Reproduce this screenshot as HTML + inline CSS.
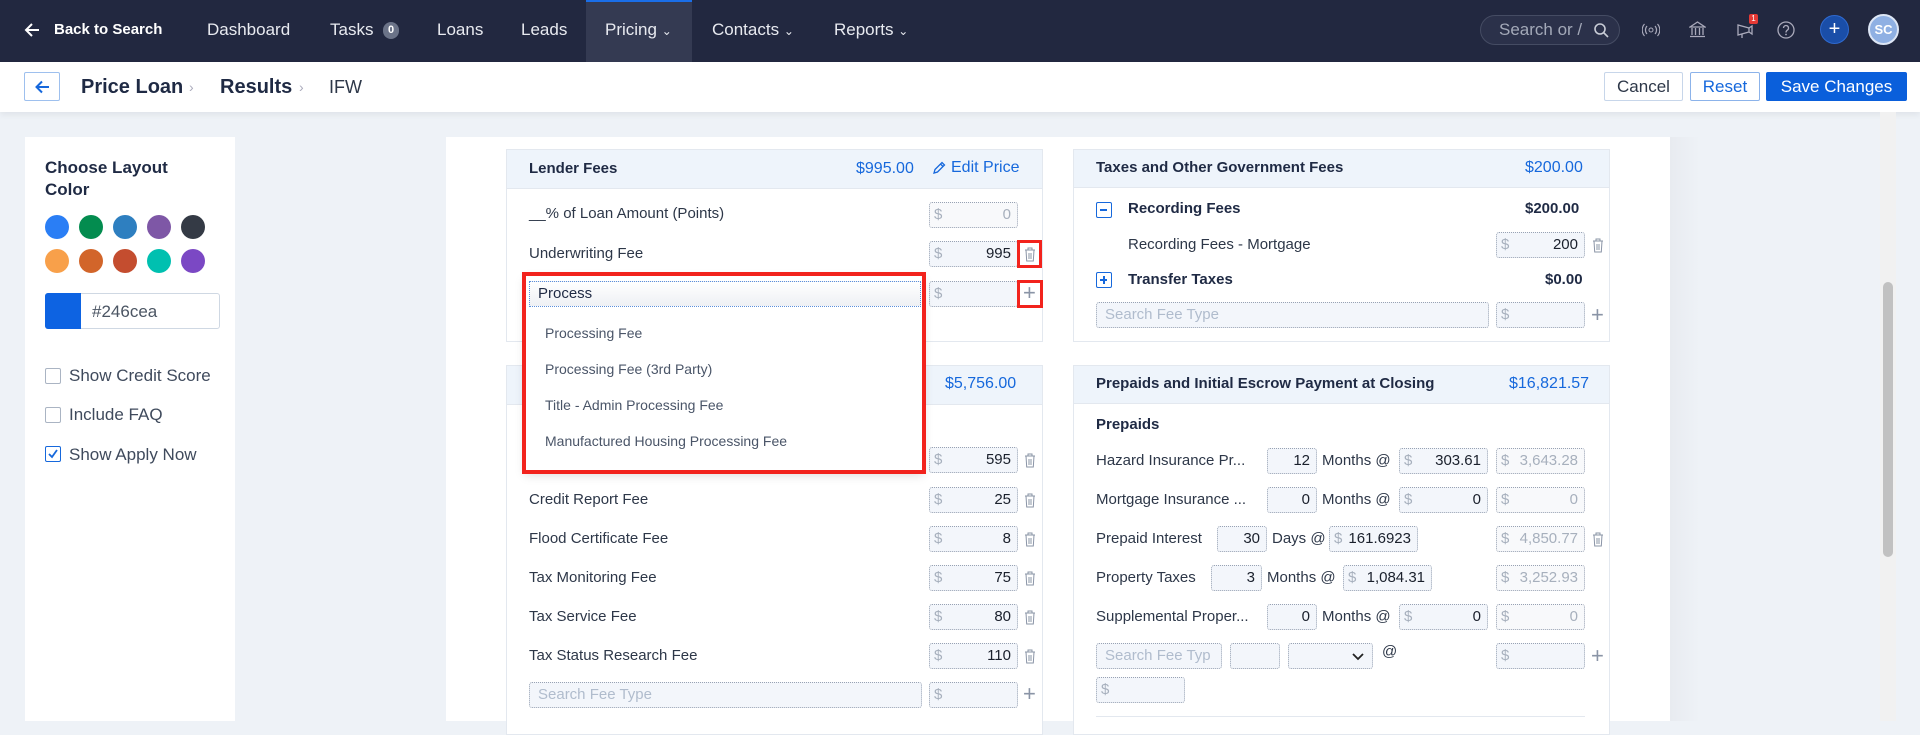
<!DOCTYPE html>
<html><head><meta charset="utf-8"><style>
*{box-sizing:border-box;margin:0;padding:0}
body{width:1920px;height:721px;overflow:hidden;background:#eef2f7;font-family:"Liberation Sans",sans-serif;position:relative;color:#2d3748}
.a{position:absolute;white-space:nowrap}
.nav{position:absolute;left:0;top:0;width:1920px;height:62px;background:#222840}
.ni{position:absolute;top:20px;font-size:17px;color:#e8eaf0}
.sub{position:absolute;left:0;top:62px;width:1920px;height:50px;background:#fff;box-shadow:0 3px 6px rgba(0,0,0,.06)}
.btn{position:absolute;top:72px;height:29px;border:1px solid #c7d6ea;background:#fff;font-size:17px;text-align:center;line-height:27px;border-radius:2px}
.panel{position:absolute;background:#fff;border:1px solid #e3e8ef}
.ph{position:absolute;left:0;right:0;top:0;height:39px;background:#eef4fb;border-bottom:1px solid #e3e8ef}
.t{position:absolute;font-size:15px;color:#2d3748;white-space:nowrap;line-height:18px}
.blue{color:#1668dc}
.inp{position:absolute;height:26px;border:1px dotted #98a2b3;background:#f3f6fb;border-radius:3px;font-size:15px;line-height:24px;color:#1a202c;text-align:right;padding-right:6px}
.inp .d{position:absolute;left:4px;top:0;color:#a7b0bd}
.inp.g{color:#a7b0bd;background:#f8f9fb}
.ph2{color:#b0bccd;text-align:left;padding-left:8px}
.tr{position:absolute;width:12px;height:15px}
.pl{position:absolute;font-size:22px;color:#8a94a6;line-height:20px}
.cb{position:absolute;left:45px;width:16px;height:16px;border:1px solid #aab4c3;border-radius:2px;background:#fff}
.cl{position:absolute;left:69px;font-size:17px;color:#3f4a5c}
.c{position:absolute;width:24px;height:24px;border-radius:50%}
.dd{position:absolute;font-size:14px;color:#4a5568}
</style></head><body>
<div class="nav">
  <svg class="a" style="left:24px;top:22px" width="16" height="16" viewBox="0 0 16 16"><path d="M15 8H2M8 2L2 8l6 6" stroke="#fff" stroke-width="2" fill="none"/></svg>
  <div class="ni" style="left:54px;top:21px;font-size:15px;font-weight:bold;color:#fff">Back to Search</div>
  <div class="ni" style="left:207px">Dashboard</div>
  <div class="ni" style="left:330px">Tasks</div>
  <div class="a" style="left:383px;top:22px;width:16px;height:17px;border-radius:8px;background:#6b7388;color:#fff;font-size:11px;text-align:center;line-height:17px;font-weight:bold">0</div>
  <div class="ni" style="left:437px">Loans</div>
  <div class="ni" style="left:521px">Leads</div>
  <div class="a" style="left:586px;top:0;width:106px;height:62px;background:#343a52;border-top:2px solid #1a6ee8"></div>
  <div class="ni" style="left:605px">Pricing <span style="font-size:12px">&#8964;</span></div>
  <div class="ni" style="left:712px">Contacts <span style="font-size:12px">&#8964;</span></div>
  <div class="ni" style="left:834px">Reports <span style="font-size:12px">&#8964;</span></div>
  <div class="a" style="left:1480px;top:15px;width:140px;height:30px;border:1px solid #454c63;border-radius:15px;background:#2b314a;color:#a3a9b8;font-size:17px;padding-left:18px;line-height:28px">Search or /<svg style="position:absolute;right:10px;top:7px" width="15" height="15" viewBox="0 0 15 15"><circle cx="6" cy="6" r="5" stroke="#c8ccd6" stroke-width="1.6" fill="none"/><path d="M10 10l4 4" stroke="#c8ccd6" stroke-width="1.6"/></svg></div>
  <svg class="a" style="left:1642px;top:22px" width="18" height="16" viewBox="0 0 18 16"><circle cx="9" cy="8" r="2" stroke="#aab" fill="none"/><path d="M5 4a6 6 0 000 8M13 4a6 6 0 010 8M2.5 2a9 9 0 000 12M15.5 2a9 9 0 010 12" stroke="#aab" fill="none" stroke-width="1.2"/></svg>
  <svg class="a" style="left:1689px;top:21px" width="17" height="17" viewBox="0 0 17 17"><path d="M1 6L8.5 1 16 6zM3 7v7M6.5 7v7M10.5 7v7M14 7v7M1 15.5h15" stroke="#aab" fill="none" stroke-width="1.3"/></svg>
  <svg class="a" style="left:1736px;top:21px" width="18" height="18" viewBox="0 0 18 18"><path d="M2 4v10l11-3V7zM13 7l3-2v8l-3-2M6 13v4" stroke="#aab" fill="none" stroke-width="1.3"/></svg>
  <div class="a" style="left:1749px;top:14px;width:9px;height:10px;background:#e53935;color:#fff;font-size:8px;text-align:center;line-height:10px;border-radius:2px">1</div>
  <svg class="a" style="left:1777px;top:21px" width="18" height="18" viewBox="0 0 18 18"><circle cx="9" cy="9" r="8" stroke="#aab" fill="none" stroke-width="1.3"/><path d="M6.5 7a2.5 2.5 0 114 2c-1 .7-1.5 1-1.5 2.5" stroke="#aab" fill="none" stroke-width="1.3"/><circle cx="9" cy="13.5" r=".9" fill="#aab"/></svg>
  <div class="a" style="left:1820px;top:15px;width:29px;height:29px;border-radius:50%;background:#1a4ea8;border:1px solid #2f6ad0;color:#fff;font-size:20px;text-align:center;line-height:26px">+</div>
  <div class="a" style="left:1868px;top:14px;width:31px;height:31px;border-radius:50%;background:#8fb0e3;border:2px solid #dde6f5;color:#fff;font-size:13px;font-weight:bold;text-align:center;line-height:27px">SC</div>
</div>
<div class="sub"></div>
<div class="a" style="left:24px;top:72px;width:36px;height:29px;border:1px solid #9ec0ee;border-radius:2px;background:#fff"><svg style="position:absolute;left:10px;top:7px" width="15" height="14" viewBox="0 0 15 14"><path d="M14 7H2M7 1.5L1.5 7 7 12.5" stroke="#1668dc" stroke-width="2" fill="none"/></svg></div>
<div class="a" style="left:81px;top:76px;font-size:20px;font-weight:bold;color:#1f2a44">Price Loan</div>
<div class="a" style="left:189px;top:79px;font-size:14px;color:#aab">&#8250;</div>
<div class="a" style="left:220px;top:76px;font-size:20px;font-weight:bold;color:#1f2a44">Results</div>
<div class="a" style="left:299px;top:79px;font-size:14px;color:#aab">&#8250;</div>
<div class="a" style="left:329px;top:77px;font-size:18px;color:#2d3748">IFW</div>
<div class="btn" style="left:1604px;width:79px;color:#2d3748">Cancel</div>
<div class="btn" style="left:1690px;width:70px;color:#1668dc;border-color:#8cb3ea">Reset</div>
<div class="btn" style="left:1766px;width:141px;color:#fff;background:#0a5fdb;border-color:#0a5fdb">Save Changes</div>

<!-- left panel -->
<div class="a" style="left:25px;top:137px;width:210px;height:584px;background:#fff"></div>
<div class="a" style="left:45px;top:157px;font-size:17px;font-weight:bold;color:#1f2a44;line-height:22px">Choose Layout<br>Color</div>
<div class="c" style="left:45px;top:215px;background:#2a7ef5"></div>
<div class="c" style="left:79px;top:215px;background:#038c4f"></div>
<div class="c" style="left:113px;top:215px;background:#2e7fc0"></div>
<div class="c" style="left:147px;top:215px;background:#7e57a6"></div>
<div class="c" style="left:181px;top:215px;background:#343a45"></div>
<div class="c" style="left:45px;top:249px;background:#f8a04a"></div>
<div class="c" style="left:79px;top:249px;background:#d2652a"></div>
<div class="c" style="left:113px;top:249px;background:#c44d2f"></div>
<div class="c" style="left:147px;top:249px;background:#00c0b0"></div>
<div class="c" style="left:181px;top:249px;background:#7b48c4"></div>
<div class="a" style="left:45px;top:293px;width:175px;height:36px;border:1px solid #cfd8e3;border-radius:3px;background:#fff"><div style="position:absolute;left:-1px;top:-1px;width:36px;height:36px;background:#0d63e2;border-radius:3px 0 0 3px"></div><div style="position:absolute;left:46px;top:8px;font-size:17px;color:#4b5563">#246cea</div></div>
<div class="cb" style="top:368px"></div><div class="cl" style="top:366px">Show Credit Score</div>
<div class="cb" style="top:407px"></div><div class="cl" style="top:405px">Include FAQ</div>
<div class="cb" style="top:446px;border-color:#1668dc"><svg style="position:absolute;left:1px;top:1px" width="12" height="12" viewBox="0 0 12 12"><path d="M2 6l3 3 5-7" stroke="#1668dc" stroke-width="1.8" fill="none"/></svg></div><div class="cl" style="top:445px">Show Apply Now</div>

<!-- main card -->
<div class="a" style="left:446px;top:137px;width:1224px;height:584px;background:#fff"></div>
<div class="a" style="left:1670px;top:137px;width:30px;height:584px;background:linear-gradient(90deg,#e8ebf0,#eef2f7)"></div>
<div class="a" style="left:1880px;top:112px;width:16px;height:609px;background:#f1f1f1"></div>
<div class="a" style="left:1883px;top:282px;width:10px;height:275px;background:#c1c1c1;border-radius:5px"></div>

<!-- Lender fees -->
<div class="panel" style="left:506px;top:149px;width:537px;height:193px"><div class="ph"></div></div>
<div class="t" style="left:529px;top:160px;font-weight:bold;color:#1f2a44;font-size:15px">Lender Fees</div>
<div class="t blue" style="left:856px;top:160px;font-size:16px">$995.00</div>
<svg class="a" style="left:932px;top:161px" width="14" height="14" viewBox="0 0 14 14"><path d="M2 12l1-3.5L10 1.5l2.5 2.5-7 7zM8.5 3l2.5 2.5" stroke="#1668dc" stroke-width="1.3" fill="none"/></svg>
<div class="t blue" style="left:951px;top:159px;font-size:16px">Edit Price</div>
<div class="t" style="left:529px;top:205px">__% of Loan Amount (Points)</div>
<div class="inp g" style="left:929px;top:202px;width:89px"><span class="d">$</span>0</div>
<div class="t" style="left:529px;top:245px">Underwriting Fee</div>
<div class="inp" style="left:929px;top:241px;width:89px"><span class="d">$</span>995</div>
<div class="inp" style="left:929px;top:281px;width:89px"><span class="d">$</span></div>

<!-- second left panel -->
<div class="panel" style="left:506px;top:365px;width:537px;height:370px"><div class="ph"></div></div>
<div class="t blue" style="left:945px;top:375px;font-size:16px">$5,756.00</div>
<div class="inp" style="left:929px;top:447px;width:89px"><span class="d">$</span>595</div>
<div class="t" style="left:529px;top:491px">Credit Report Fee</div>
<div class="inp" style="left:929px;top:487px;width:89px"><span class="d">$</span>25</div>
<div class="t" style="left:529px;top:530px">Flood Certificate Fee</div>
<div class="inp" style="left:929px;top:526px;width:89px"><span class="d">$</span>8</div>
<div class="t" style="left:529px;top:569px">Tax Monitoring Fee</div>
<div class="inp" style="left:929px;top:565px;width:89px"><span class="d">$</span>75</div>
<div class="t" style="left:529px;top:608px">Tax Service Fee</div>
<div class="inp" style="left:929px;top:604px;width:89px"><span class="d">$</span>80</div>
<div class="t" style="left:529px;top:647px">Tax Status Research Fee</div>
<div class="inp" style="left:929px;top:643px;width:89px"><span class="d">$</span>110</div>
<div class="inp ph2" style="left:529px;top:682px;width:393px;color:#b0bccd">Search Fee Type</div>
<div class="inp" style="left:929px;top:682px;width:89px"><span class="d">$</span></div>
<div class="pl" style="left:1023px;top:684px">+</div>

<!-- trash icons left -->
<svg class="tr" style="left:1024px;top:247px" viewBox="0 0 12 15"><path d="M1 3h10M4 3V1h4v2M2 3l.7 11h6.6L10 3M5 6v6M7 6v6" stroke="#8a94a6" fill="none" stroke-width="1"/></svg>
<svg class="tr" style="left:1024px;top:453px" viewBox="0 0 12 15"><path d="M1 3h10M4 3V1h4v2M2 3l.7 11h6.6L10 3M5 6v6M7 6v6" stroke="#8a94a6" fill="none" stroke-width="1"/></svg>
<svg class="tr" style="left:1024px;top:493px" viewBox="0 0 12 15"><path d="M1 3h10M4 3V1h4v2M2 3l.7 11h6.6L10 3M5 6v6M7 6v6" stroke="#8a94a6" fill="none" stroke-width="1"/></svg>
<svg class="tr" style="left:1024px;top:532px" viewBox="0 0 12 15"><path d="M1 3h10M4 3V1h4v2M2 3l.7 11h6.6L10 3M5 6v6M7 6v6" stroke="#8a94a6" fill="none" stroke-width="1"/></svg>
<svg class="tr" style="left:1024px;top:571px" viewBox="0 0 12 15"><path d="M1 3h10M4 3V1h4v2M2 3l.7 11h6.6L10 3M5 6v6M7 6v6" stroke="#8a94a6" fill="none" stroke-width="1"/></svg>
<svg class="tr" style="left:1024px;top:610px" viewBox="0 0 12 15"><path d="M1 3h10M4 3V1h4v2M2 3l.7 11h6.6L10 3M5 6v6M7 6v6" stroke="#8a94a6" fill="none" stroke-width="1"/></svg>
<svg class="tr" style="left:1024px;top:649px" viewBox="0 0 12 15"><path d="M1 3h10M4 3V1h4v2M2 3l.7 11h6.6L10 3M5 6v6M7 6v6" stroke="#8a94a6" fill="none" stroke-width="1"/></svg>

<!-- red boxes -->
<div class="a" style="left:1017px;top:240px;width:25px;height:28px;border:3px solid #f2231d"></div>
<div class="a" style="left:1017px;top:280px;width:26px;height:28px;border:3px solid #f2231d"></div>
<div class="pl" style="left:1023px;top:283px">+</div>

<!-- dropdown -->
<div class="a" style="left:525px;top:275px;width:398px;height:196px;background:#fff;box-shadow:0 4px 10px rgba(0,0,0,.15)"></div>
<div class="a" style="left:529px;top:281px;width:392px;height:26px;border:1px dotted #5b8fdc;background:linear-gradient(#fff,#eef0f4);font-size:15px;line-height:24px;padding-left:8px;color:#1f2a44">Process</div>
<div class="dd" style="left:545px;top:325px">Processing Fee</div>
<div class="dd" style="left:545px;top:361px">Processing Fee (3rd Party)</div>
<div class="dd" style="left:545px;top:397px">Title - Admin Processing Fee</div>
<div class="dd" style="left:545px;top:433px">Manufactured Housing Processing Fee</div>
<div class="a" style="left:522px;top:272px;width:404px;height:202px;border:4px solid #f2231d"></div>

<!-- Taxes panel -->
<div class="panel" style="left:1073px;top:149px;width:537px;height:193px"><div class="ph" style="height:38px"></div></div>
<div class="t" style="left:1096px;top:159px;font-weight:bold;color:#1f2a44">Taxes and Other Government Fees</div>
<div class="t blue" style="left:1525px;top:159px;font-size:16px">$200.00</div>
<div class="a" style="left:1096px;top:202px;width:16px;height:16px;border:1.5px solid #1668dc;border-radius:2px"><div style="position:absolute;left:3px;top:6px;width:7px;height:2px;background:#1668dc"></div></div>
<div class="t" style="left:1128px;top:200px;font-weight:bold;color:#1f2a44">Recording Fees</div>
<div class="t" style="left:1525px;top:200px;font-weight:bold;color:#1f2a44">$200.00</div>
<div class="t" style="left:1128px;top:236px">Recording Fees - Mortgage</div>
<div class="inp" style="left:1496px;top:232px;width:89px"><span class="d">$</span>200</div>
<svg class="tr" style="left:1592px;top:238px" viewBox="0 0 12 15"><path d="M1 3h10M4 3V1h4v2M2 3l.7 11h6.6L10 3M5 6v6M7 6v6" stroke="#8a94a6" fill="none" stroke-width="1"/></svg>
<div class="a" style="left:1096px;top:272px;width:16px;height:16px;border:1.5px solid #1668dc;border-radius:2px"><div style="position:absolute;left:3px;top:6px;width:7px;height:2px;background:#1668dc"></div><div style="position:absolute;left:5.5px;top:3px;width:2px;height:8px;background:#1668dc"></div></div>
<div class="t" style="left:1128px;top:271px;font-weight:bold;color:#1f2a44">Transfer Taxes</div>
<div class="t" style="left:1545px;top:271px;font-weight:bold;color:#1f2a44">$0.00</div>
<div class="inp ph2" style="left:1096px;top:302px;width:393px">Search Fee Type</div>
<div class="inp" style="left:1496px;top:302px;width:89px"><span class="d">$</span></div>
<div class="pl" style="left:1591px;top:305px">+</div>

<!-- Prepaids panel -->
<div class="panel" style="left:1073px;top:365px;width:537px;height:370px"><div class="ph" style="height:38px"></div></div>
<div class="t" style="left:1096px;top:375px;font-weight:bold;color:#1f2a44">Prepaids and Initial Escrow Payment at Closing</div>
<div class="t blue" style="left:1509px;top:375px;font-size:16px">$16,821.57</div>
<div class="t" style="left:1096px;top:416px;font-weight:bold;color:#1f2a44">Prepaids</div>

<div class="t" style="left:1096px;top:452px">Hazard Insurance Pr...</div>
<div class="inp" style="left:1267px;top:448px;width:50px">12</div>
<div class="t" style="left:1322px;top:452px">Months @</div>
<div class="inp" style="left:1399px;top:448px;width:89px"><span class="d">$</span>303.61</div>
<div class="inp g" style="left:1496px;top:448px;width:89px"><span class="d">$</span>3,643.28</div>

<div class="t" style="left:1096px;top:491px">Mortgage Insurance ...</div>
<div class="inp" style="left:1267px;top:487px;width:50px">0</div>
<div class="t" style="left:1322px;top:491px">Months @</div>
<div class="inp" style="left:1399px;top:487px;width:89px"><span class="d">$</span>0</div>
<div class="inp g" style="left:1496px;top:487px;width:89px"><span class="d">$</span>0</div>

<div class="t" style="left:1096px;top:530px">Prepaid Interest</div>
<div class="inp" style="left:1217px;top:526px;width:50px">30</div>
<div class="t" style="left:1272px;top:530px">Days @</div>
<div class="inp" style="left:1329px;top:526px;width:89px"><span class="d">$</span>161.6923</div>
<div class="inp g" style="left:1496px;top:526px;width:89px"><span class="d">$</span>4,850.77</div>
<svg class="tr" style="left:1592px;top:532px" viewBox="0 0 12 15"><path d="M1 3h10M4 3V1h4v2M2 3l.7 11h6.6L10 3M5 6v6M7 6v6" stroke="#8a94a6" fill="none" stroke-width="1"/></svg>

<div class="t" style="left:1096px;top:569px">Property Taxes</div>
<div class="inp" style="left:1211px;top:565px;width:51px">3</div>
<div class="t" style="left:1267px;top:569px">Months @</div>
<div class="inp" style="left:1343px;top:565px;width:89px"><span class="d">$</span>1,084.31</div>
<div class="inp g" style="left:1496px;top:565px;width:89px"><span class="d">$</span>3,252.93</div>

<div class="t" style="left:1096px;top:608px">Supplemental Proper...</div>
<div class="inp" style="left:1267px;top:604px;width:50px">0</div>
<div class="t" style="left:1322px;top:608px">Months @</div>
<div class="inp" style="left:1399px;top:604px;width:89px"><span class="d">$</span>0</div>
<div class="inp g" style="left:1496px;top:604px;width:89px"><span class="d">$</span>0</div>

<div class="inp ph2" style="left:1096px;top:643px;width:126px">Search Fee Typ</div>
<div class="inp" style="left:1230px;top:643px;width:50px"></div>
<div class="inp" style="left:1288px;top:643px;width:85px"><svg style="position:absolute;right:8px;top:9px" width="12" height="8" viewBox="0 0 12 8"><path d="M1 1l5 5 5-5" stroke="#222" stroke-width="1.8" fill="none"/></svg></div>
<div class="t" style="left:1382px;top:643px">@</div>
<div class="inp" style="left:1496px;top:643px;width:89px"><span class="d">$</span></div>
<div class="pl" style="left:1591px;top:646px">+</div>
<div class="inp" style="left:1096px;top:677px;width:89px"><span class="d">$</span></div>
<div class="a" style="left:1096px;top:716px;width:489px;height:1px;background:#e3e8ef"></div>
</body></html>
